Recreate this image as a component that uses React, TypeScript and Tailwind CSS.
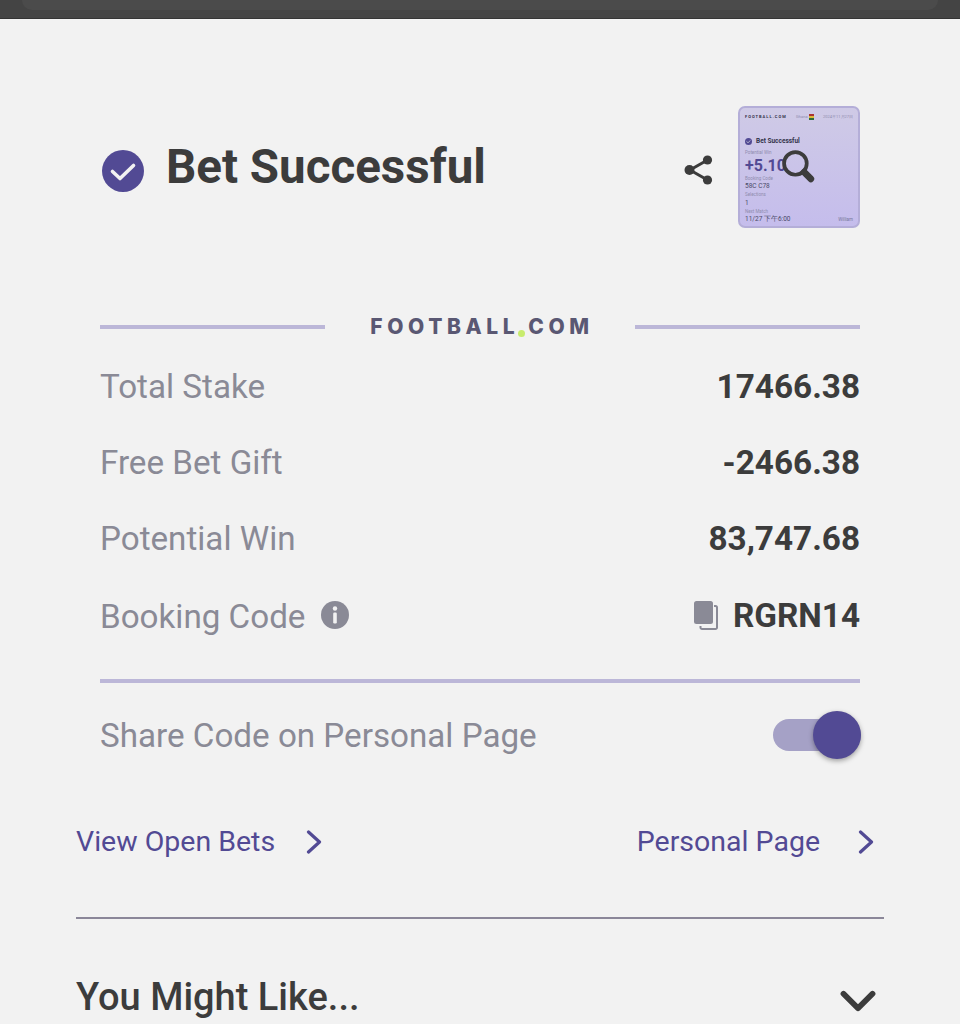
import { ChevronDown } from 'lucide-react';

const rows = [
  { label: 'Total Stake', value: '17466.38' },
  { label: 'Free Bet Gift', value: '-2466.38' },
  { label: 'Potential Win', value: '83,747.68' },
];

function CheckBadge({ className }: { className: string }) {
  return (
    <svg viewBox="0 0 42 42" className={className}>
      <circle cx="21" cy="21" r="21" fill="#524a94" />
      <path d="M10.5 21.5l7.5 7 13.5-13" fill="none" stroke="#f2f2f2" strokeWidth="3.6" strokeLinecap="round" strokeLinejoin="round" />
    </svg>
  );
}

function ShareIcon() {
  return (
    <svg viewBox="0 0 30 32" className="w-[30px] h-[32px]">
      <path d="M23.5 6L6 16l17.5 10" fill="none" stroke="#3c3c3c" strokeWidth="3" />
      <circle cx="23.5" cy="6" r="4.6" fill="#3c3c3c" />
      <circle cx="5.5" cy="16" r="5" fill="#3c3c3c" />
      <circle cx="23.5" cy="26" r="4.6" fill="#3c3c3c" />
    </svg>
  );
}

function LinkChevron() {
  return (
    <svg viewBox="0 0 16 24" className="w-[16px] h-[24px]">
      <path d="M2.5 2L13.5 12L2.5 22" fill="none" stroke="#524a94" strokeWidth="3.2" strokeLinecap="round" strokeLinejoin="round" />
    </svg>
  );
}

function Thumbnail() {
  return (
    <div className="relative w-[122px] h-[122px] rounded-[7px] border-2 border-[#b4aed8] bg-gradient-to-b from-[#cfcae6] to-[#c5bdec] overflow-hidden px-[5px] text-[#4a4a68]">
      <div className="flex items-center justify-between pt-[6px] text-[4px] leading-[6px]">
        <span className="font-bold tracking-[1px] text-[#33334a]">FOOTBALL.COM</span>
        <span className="flex items-center gap-[1px] text-[#8f8cae]">
          Ghana
          <svg viewBox="0 0 5 6" className="w-[5px] h-[6px]">
            <rect width="5" height="2" fill="#a33" />
            <rect y="2" width="5" height="2" fill="#dcb93a" />
            <rect y="4" width="5" height="2" fill="#2e6b3a" />
          </svg>
        </span>
        <span className="text-[#8f8cae]">2024年11月27日</span>
      </div>
      <div className="flex items-center gap-[4px] mt-[17px]">
        <CheckBadge className="w-[7px] h-[7px]" />
        <span className="text-[6.5px] leading-[8px] font-bold text-[#33334a]">Bet Successful</span>
      </div>
      <div className="text-[4.5px] leading-[6px] mt-[5px] text-[#8f8cae]">Potential Win</div>
      <div className="text-[16px] leading-[20px] font-bold text-[#524a94]">+5.10</div>
      <div className="text-[4.5px] leading-[6px] text-[#8f8cae]">Booking Code</div>
      <div className="text-[6.5px] leading-[9px]">58C C78</div>
      <div className="text-[4.5px] leading-[6px] mt-[1px] text-[#8f8cae]">Selections</div>
      <div className="text-[6.5px] leading-[10px]">1</div>
      <div className="text-[4.5px] leading-[6px] mt-[1px] text-[#8f8cae]">Next Match</div>
      <div className="flex items-center justify-between text-[6.5px] leading-[9px]">
        <span>11/27 下午6:00</span>
        <span className="text-[4.5px] text-[#77779a]">William</span>
      </div>
      <svg viewBox="0 0 34 34" className="absolute left-[41px] top-[41px] w-[35px] h-[35px]">
        <circle cx="14" cy="14" r="11" fill="none" stroke="#3c3c3c" strokeWidth="3.6" />
        <path d="M22.5 22.5L29 29" stroke="#3c3c3c" strokeWidth="6.5" strokeLinecap="round" />
      </svg>
    </div>
  );
}

export default function App() {
  return (
    <div className="w-[960px] h-[1024px] overflow-hidden bg-[#f2f2f2] font-['Roboto',sans-serif]">
      <div className="h-[19px] bg-[#444444] px-[22px] border-b border-[#333333]">
        <div className="h-[10px] bg-[#4b4b4b] rounded-b-[14px]" />
      </div>

      <div className="px-[76px]">
        <div className="px-[24px]">
          <div className="flex items-center h-[122px] mt-[87px]">
            <CheckBadge className="w-[42px] h-[42px] ml-[2px] mt-[8px]" />
            <h1 className="ml-[22px] text-[47.5px] leading-[54px] font-bold text-[#3c3c3c]">Bet Successful</h1>
            <div className="ml-auto mr-[24px] mt-[6px]">
              <ShareIcon />
            </div>
            <Thumbnail />
          </div>

          <div className="flex items-center justify-between mt-[85px] h-[28px]">
            <div className="w-[225px] h-[4px] bg-[#bcb7d8]" />
            <div className="flex items-center font-['Inter',sans-serif] text-[21px] leading-[28px] font-extrabold tracking-[4.6px] text-[#5a5873]">
              <span>FOOTBALL</span>
              <span className="w-[7px] h-[7px] mt-[12px] ml-[-1px] mr-[3px] rounded-full bg-[#c8ec6e]" />
              <span className="mr-[-4px]">COM</span>
            </div>
            <div className="w-[225px] h-[4px] bg-[#bcb7d8]" />
          </div>

          <div className="mt-[8px]">
            {rows.map((row) => (
              <div key={row.label} className="flex items-center justify-between h-[76px]">
                <span className="text-[33.2px] text-[#8a8a96]">{row.label}</span>
                <span className="text-[33.3px] font-bold text-[#3c3c3c]">{row.value}</span>
              </div>
            ))}
            <div className="flex items-center justify-between h-[76px]">
              <div className="flex items-center gap-[16px] text-[#8a8a96]">
                <span className="text-[33.2px] mt-[3px]">Booking Code</span>
                <svg viewBox="0 0 28 28" className="w-[28px] h-[28px]">
                  <circle cx="14" cy="14" r="14" fill="#8a8a96" />
                  <circle cx="14" cy="7.5" r="2.2" fill="#f2f2f2" />
                  <rect x="12.2" y="11.5" width="3.6" height="11" rx="1.2" fill="#f2f2f2" />
                </svg>
              </div>
              <div className="flex items-center gap-[15px]">
                <svg viewBox="0 0 24 29" className="w-[24px] h-[29px]">
                  <path d="M20 5h1.5a1.5 1.5 0 0 1 1.5 1.5V26.500a1.500 1.500 0 0 1-1.500 1.500H8a1.500 1.500 0 0 1-1.500-1.500V25" fill="none" stroke="#8a8a96" strokeWidth="2" />
                  <rect x="0" y="0" width="19" height="23" rx="2.5" fill="#8a8a96" />
                </svg>
                <span className="text-[33.3px] font-bold text-[#3c3c3c] mt-[1px]">RGRN14</span>
              </div>
            </div>
          </div>

          <div className="h-[4px] bg-[#bcb7d8] mt-[26px]" />

          <div className="flex items-center justify-between h-[104px] text-[33.2px] text-[#8a8a96]">
            <span className="mt-[2px]">Share Code on Personal Page</span>
            <div className="relative w-[88px] h-[32px] mr-[-1px] rounded-full bg-[#a5a1c6]">
              <div className="absolute right-0 top-[-8px] w-[48px] h-[48px] rounded-full bg-[#524a94] shadow-[0_2px_5px_rgba(0,0,0,0.35)]" />
            </div>
          </div>
        </div>

        <div className="flex items-center justify-between h-[60px] mt-[25px] text-[#524a94] text-[28.5px]">
          <div className="flex items-center gap-[31px]">
            <span>View Open Bets</span>
            <LinkChevron />
          </div>
          <div className="flex items-center gap-[38px] mr-[10px]">
            <span>Personal Page</span>
            <LinkChevron />
          </div>
        </div>

        <div className="h-[2px] bg-[#8b8799] mt-[45px]" />

        <div className="flex items-center justify-between mt-[50px] h-[56px]">
          <span className="text-[38px] font-medium text-[#3c3c3c]">You Might Like...</span>
          <ChevronDown className="w-[58px] h-[58px] mr-[-3px] mt-[8px] text-[#3c3c3c]" strokeWidth={2.4} />
        </div>
      </div>
    </div>
  );
}
